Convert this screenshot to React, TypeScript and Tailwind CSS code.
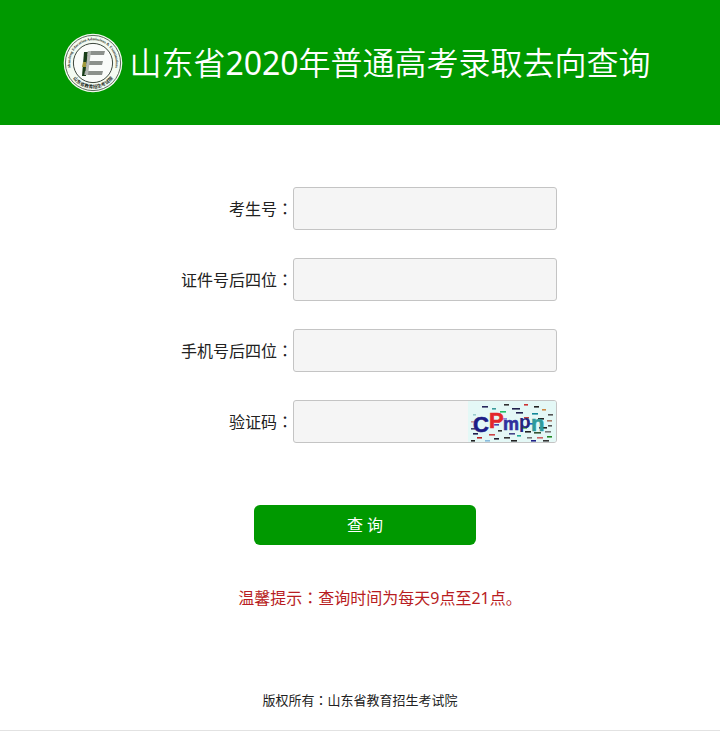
import { useState } from 'react';
import type { FormEvent, ReactNode } from 'react';

type FieldName = 'candidateNo' | 'idTail' | 'phoneTail' | 'captcha';

interface FieldProps {
  name: FieldName;
  label: string;
  value: string;
  maxLength: number;
  onChange: (name: FieldName, value: string) => void;
  children?: ReactNode;
}

// Full-width colon, set in a face that centres it in its cell
const Colon = () => <span className="font-['Noto_Sans_CJK_TC',sans-serif]">：</span>;

const Field = ({ name, label, value, maxLength, onChange, children }: FieldProps) => (
  <div className="flex items-center justify-center">
    <label htmlFor={name} className="w-[130px] shrink-0 text-right text-base whitespace-nowrap">
      {label}
      <Colon />
    </label>
    <div className="relative w-[264px]">
      <input
        id={name}
        name={name}
        type="text"
        autoComplete="off"
        maxLength={maxLength}
        value={value}
        onChange={(e) => onChange(name, e.target.value)}
        className="block h-[43px] w-full rounded-[3px] border border-[#c4c4c4] bg-[#f5f5f5] px-3 text-base outline-none focus:border-[#009900]"
      />
      {children}
    </div>
  </div>
);

const Logo = () => (
  <svg viewBox="0 0 60 60" className="h-[60px] w-[60px] shrink-0" role="img" aria-label="山东省教育招生考试院">
    <defs>
      <path id="ring-top" d="M 9.5 40 A 22.8 22.8 0 1 1 50.5 40" />
      <path id="ring-bottom" d="M 5.1 34 A 25.2 25.2 0 0 0 54.9 34" />
    </defs>
    <circle cx="30" cy="30" r="29.3" fill="#f4fbf2" />
    <circle cx="30" cy="30" r="27.6" fill="none" stroke="#4a5a4a" strokeWidth="0.9" />
    <circle cx="30" cy="30" r="19.6" fill="#fafcfa" stroke="#3c463c" strokeWidth="1" />
    <text fontSize="3.8" fontWeight="700" fill="#1c2a1c" fontFamily="Liberation Serif, serif">
      <textPath href="#ring-top" startOffset="50%" textAnchor="middle">
        Shandong Education Admissions &amp; Examinations
      </textPath>
    </text>
    <text fontSize="4.6" fontWeight="700" fill="#1c2a1c" fontFamily="Noto Sans CJK SC, sans-serif">
      <textPath href="#ring-bottom" startOffset="50%" textAnchor="middle">
        山东省教育招生考试院
      </textPath>
    </text>
    {/* three grey bars of the E over a dark green spine */}
    <path d="M21 19 h4 l-1 12 l-1 12 h-4 l1 -12 z" fill="#173d17" />
    <path d="M20 29 h3 v5 h-4 z" fill="#a09a3c" />
    <path d="M25 18 h17 l-1 4 h-17 z" fill="#8c918c" />
    <path d="M24 28 h16 l-1 4 h-16 z" fill="#8c918c" />
    <path d="M22 38 h18 l-1 4 h-18 z" fill="#8c918c" />
    <path d="M25 18 h3 l-3 24 h-3 z" fill="#b4b8b4" />
  </svg>
);

// x, y, width, colour
const specks: [number, number, number, string][] = [
  [14, 5, 6, '#26265c'], [36, 3, 5, '#333'], [56, 3, 4, '#c33'], [66, 5, 5, '#222'],
  [24, 7, 4, '#3a9a9a'], [44, 7, 8, '#20204c'], [74, 8, 4, '#c84'], [48, 11, 7, '#20204c'],
  [32, 10, 6, '#2b6'], [64, 12, 6, '#189'], [80, 13, 5, '#555'], [5, 13, 3, '#9cc'],
  [56, 16, 5, '#b44'], [70, 17, 6, '#222'], [79, 19, 5, '#a76'], [34, 17, 5, '#88d'],
  [3, 20, 4, '#c99'], [43, 20, 5, '#444'], [61, 22, 4, '#26c'], [80, 24, 4, '#555'],
  [26, 23, 5, '#44a'], [54, 26, 5, '#282'], [71, 26, 8, '#222'], [3, 27, 4, '#446'],
  [57, 30, 6, '#222'], [66, 31, 7, '#353'], [77, 30, 6, '#777'], [30, 29, 4, '#333'],
  [5, 32, 5, '#20204c'], [21, 33, 6, '#c44'], [41, 32, 6, '#448'], [49, 34, 4, '#2a9'],
  [9, 36, 5, '#b22'], [26, 37, 5, '#223'], [36, 36, 6, '#333'], [59, 36, 5, '#777'],
  [69, 36, 6, '#c66'], [79, 35, 5, '#282'], [3, 39, 4, '#222'], [17, 39, 5, '#8bd'],
  [43, 39, 6, '#222'], [63, 39, 5, '#228'], [75, 39, 6, '#333'],
];

const Captcha = () => (
  <svg viewBox="0 0 88 41" className="h-[41px] w-[88px]" role="img" aria-label="验证码图片">
    <rect width="88" height="41" fill="#e4f8f6" />
    {specks.map(([x, y, w, fill]) => (
      <rect key={`${x}-${y}`} x={x} y={y} width={w} height="1.6" fill={fill} />
    ))}
    <g fontFamily="Liberation Sans, sans-serif" fontWeight="700" strokeWidth="0.6">
      <text x="5" y="31" fontSize="22" fill="#1d1d86" stroke="#1d1d86">C</text>
      <text x="21" y="27" fontSize="22" fill="#e3262b" stroke="#e3262b">P</text>
      <text x="35" y="29" fontSize="18" fill="#3030a0" stroke="#3030a0">m</text>
      <text x="51" y="27" fontSize="19" fill="#25257d">p</text>
      <text x="63" y="30" fontSize="22" fill="#2f9b9b" stroke="#2f9b9b">n</text>
    </g>
  </svg>
);

export default function App() {
  const [form, setForm] = useState<Record<FieldName, string>>({
    candidateNo: '',
    idTail: '',
    phoneTail: '',
    captcha: '',
  });

  const handleChange = (name: FieldName, value: string) => {
    setForm((prev) => ({ ...prev, [name]: value }));
  };

  const handleSubmit = (e: FormEvent) => {
    e.preventDefault();
  };

  return (
    <div className="border-b border-[#e2e2e2] bg-white font-['Noto_Sans','Noto_Sans_CJK_SC',sans-serif] text-[#222]">
      <header className="flex h-[125px] items-center justify-center gap-1.5 bg-[#009900] pr-1.5">
        <Logo />
        <h1 className="text-[32px] leading-10 font-[350] whitespace-nowrap text-white">
          山东省<span className="font-normal">2020</span>年普通高考录取去向查询
        </h1>
      </header>

      <main className="pt-[62px]">
        <form onSubmit={handleSubmit}>
          <div className="flex flex-col gap-7">
            <Field name="candidateNo" label="考生号" value={form.candidateNo} maxLength={14} onChange={handleChange} />
            <Field name="idTail" label="证件号后四位" value={form.idTail} maxLength={4} onChange={handleChange} />
            <Field name="phoneTail" label="手机号后四位" value={form.phoneTail} maxLength={4} onChange={handleChange} />
            <Field name="captcha" label="验证码" value={form.captcha} maxLength={5} onChange={handleChange}>
              <button type="button" aria-label="换一张" className="absolute top-px right-px overflow-hidden rounded-r-[2px]">
                <Captcha />
              </button>
            </Field>
          </div>

          <div className="flex justify-center pt-[62px] pl-2.5">
            <button type="submit" className="h-10 w-[222px] rounded-md bg-[#009900] text-base text-white">
              查 询
            </button>
          </div>
        </form>

        <p className="pt-10 pl-10 text-center text-base leading-6 text-[#b81c22]">
          温馨提示
          <Colon />
          查询时间为每天9点至21点。
        </p>
      </main>

      <footer className="pt-20 pb-5 text-center text-[13px] leading-5">
        版权所有
        <Colon />
        山东省教育招生考试院
      </footer>
    </div>
  );
}
